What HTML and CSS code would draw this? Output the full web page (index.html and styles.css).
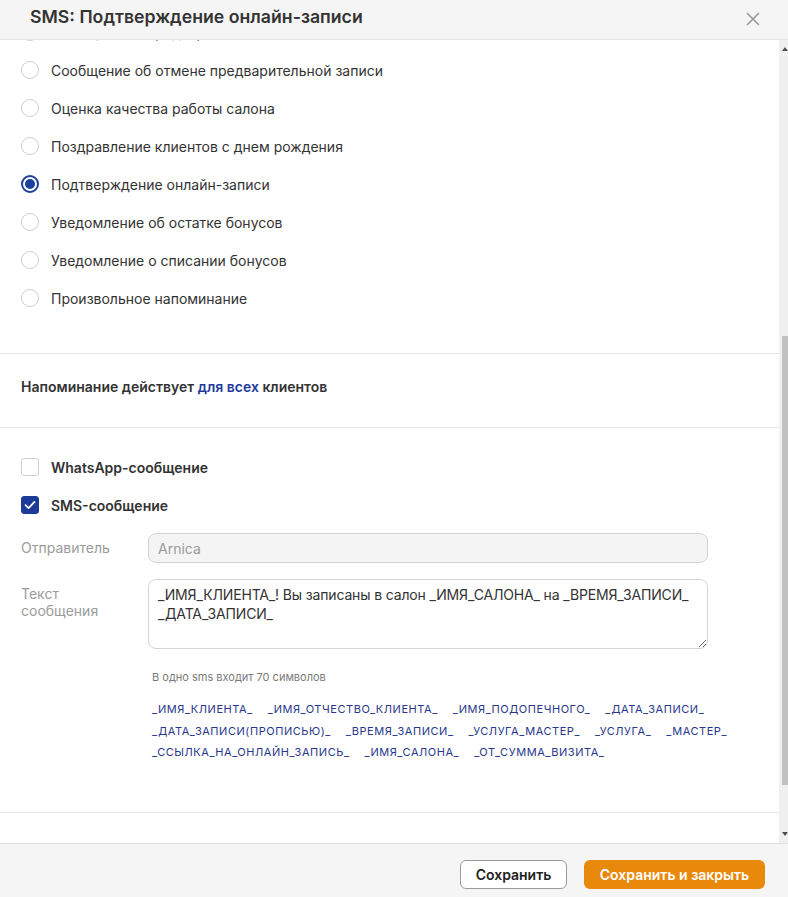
FILE: index.html
```html
<!DOCTYPE html>
<html lang="ru">
<head>
<meta charset="utf-8">
<title>SMS: Подтверждение онлайн-записи</title>
<link rel="stylesheet" href="styles.css">
</head>
<body>
<div class="modal">
  <header class="modal-header">
    <h1 class="modal-title">SMS: Подтверждение онлайн-записи</h1>
    <button class="close-btn" aria-label="Закрыть">
      <svg width="14" height="14" viewBox="0 0 14 14"><path d="M1 1L13 13M13 1L1 13" stroke="#9a9a9a" stroke-width="1.6" fill="none"/></svg>
    </button>
  </header>

  <div class="modal-main">
    <div class="modal-body" id="body">
      <section class="section list-section">
        <label class="radio-row"><span class="radio"></span><span>Напоминание о записи</span></label>
        <label class="radio-row"><span class="radio"></span><span>Напоминание о записи за 2 часа</span></label>
        <label class="radio-row"><span class="radio"></span><span>Благодарность за визит</span></label>
        <label class="radio-row"><span class="radio"></span><span>Напоминание о повторном визите</span></label>
        <label class="radio-row"><span class="radio"></span><span>Приглашение на повторный визит</span></label>
        <label class="radio-row"><span class="radio"></span><span>Сообщение о новой записи</span></label>
        <label class="radio-row"><span class="radio"></span><span>Сообщение об изменении записи</span></label>
        <label class="radio-row"><span class="radio"></span><span>Сообщение об отмене записи</span></label>
        <label class="radio-row"><span class="radio"></span><span>Напоминание о пропущенном визите</span></label>
        <label class="radio-row"><span class="radio"></span><span>Начисление бонусов</span></label>
        <label class="radio-row"><span class="radio"></span><span>Напоминание о сгорании бонусов</span></label>
        <label class="radio-row"><span class="radio"></span><span>Предварительная запись</span></label>
        <label class="radio-row"><span class="radio"></span><span>Сообщение о предварительной записи</span></label>
        <label class="radio-row"><span class="radio"></span><span>Сообщение об отмене предварительной записи</span></label>
        <label class="radio-row"><span class="radio"></span><span>Оценка качества работы салона</span></label>
        <label class="radio-row"><span class="radio"></span><span>Поздравление клиентов с днем рождения</span></label>
        <label class="radio-row" id="selected"><span class="radio checked"></span><span>Подтверждение онлайн-записи</span></label>
        <label class="radio-row"><span class="radio"></span><span>Уведомление об остатке бонусов</span></label>
        <label class="radio-row"><span class="radio"></span><span>Уведомление о списании бонусов</span></label>
        <label class="radio-row"><span class="radio"></span><span>Произвольное напоминание</span></label>
      </section>

      <section class="section scope-section">
        <p class="scope">Напоминание действует <a class="scope-link" href="#">для всех</a> клиентов</p>
      </section>

      <section class="section channels-section">
        <label class="check-row"><span class="checkbox"></span><span>WhatsApp-сообщение</span></label>
        <label class="check-row"><span class="checkbox checked">
          <svg width="12" height="10" viewBox="0 0 12 10"><path d="M1.5 5.2L4.6 8.2L10.5 1.8" stroke="#fff" stroke-width="1.7" fill="none" stroke-linecap="round" stroke-linejoin="round"/></svg>
        </span><span>SMS-сообщение</span></label>

        <div class="form-row sender-row">
          <div class="form-label">Отправитель</div>
          <input class="field input" type="text" value="Arnica" readonly>
        </div>
        <div class="form-row text-row">
          <div class="form-label">Текст<br>сообщения</div>
          <textarea class="field textarea">_ИМЯ_КЛИЕНТА_! Вы записаны в салон _ИМЯ_САЛОНА_ на _ВРЕМЯ_ЗАПИСИ_ _ДАТА_ЗАПИСИ_</textarea>
        </div>
        <div class="hint">В одно sms входит 70 символов</div>
        <div class="tags">
          <span class="tag">_ИМЯ_КЛИЕНТА_</span>
          <span class="tag">_ИМЯ_ОТЧЕСТВО_КЛИЕНТА_</span>
          <span class="tag">_ИМЯ_ПОДОПЕЧНОГО_</span>
          <span class="tag">_ДАТА_ЗАПИСИ_</span>
          <span class="tag">_ДАТА_ЗАПИСИ(ПРОПИСЬЮ)_</span>
          <span class="tag">_ВРЕМЯ_ЗАПИСИ_</span>
          <span class="tag">_УСЛУГА_МАСТЕР_</span>
          <span class="tag">_УСЛУГА_</span>
          <span class="tag">_МАСТЕР_</span>
          <span class="tag">_ССЫЛКА_НА_ОНЛАЙН_ЗАПИСЬ_</span>
          <span class="tag">_ИМЯ_САЛОНА_</span>
          <span class="tag">_ОТ_СУММА_ВИЗИТА_</span>
        </div>
      </section>

      <section class="section tail-section"></section>
    </div>

    <div class="scrollbar" aria-hidden="true">
      <div class="sb-btn sb-up"></div>
      <div class="sb-track">
        <div class="sb-thumb" id="thumb"></div>
      </div>
      <div class="sb-btn sb-down"></div>
    </div>
  </div>

  <footer class="modal-footer">
    <button class="btn btn-secondary">Сохранить</button>
    <button class="btn btn-primary">Сохранить и закрыть</button>
  </footer>
</div>
<script src="script.js"></script>
</body>
</html>
```

FILE: styles.css
```css
* { box-sizing: border-box; }

html, body {
  margin: 0;
  padding: 0;
  height: 100%;
  background: #fff;
}

body {
  font-family: Inter, "Noto Sans", "DejaVu Sans", sans-serif;
  font-size: 14px;
  color: #333;
}

.modal {
  display: flex;
  flex-direction: column;
  height: 100vh;
}

.modal-header {
  flex: 0 0 40px;
  display: flex;
  align-items: center;
  justify-content: space-between;
  padding: 0 27px 6px 30px;
  background: #f5f5f5;
  border-bottom: 1px solid #e3e3e3;
}

.modal-title {
  margin: 0;
  font-size: 17.7px;
  font-weight: 600;
  color: #333;
}

.close-btn {
  border: 0;
  background: none;
  padding: 0;
  width: 16px;
  height: 16px;
  display: flex;
  align-items: center;
  justify-content: center;
  margin-top: 4px;
}

.modal-main {
  flex: 1 1 auto;
  min-height: 0;
  display: flex;
}

.modal-body {
  flex: 1 1 auto;
  min-width: 0;
  overflow-y: auto;
  scrollbar-width: none;
  background: #fff;
}
.modal-body::-webkit-scrollbar { display: none; }

/* custom scrollbar */
.scrollbar {
  flex: 0 0 8px;
  display: flex;
  flex-direction: column;
  background: #f0f0f0;
}

.sb-btn {
  flex: 0 0 14px;
  display: flex;
  justify-content: center;
  padding-left: 3px;
}

.sb-up { align-items: flex-end; }
.sb-down { align-items: flex-start; }

.sb-up::before {
  content: "";
  width: 0;
  height: 0;
  border-left: 3px solid transparent;
  border-right: 3px solid transparent;
  border-bottom: 4px solid #505050;
  margin-bottom: 3px;
}
.sb-down::before {
  content: "";
  width: 0;
  height: 0;
  border-left: 3px solid transparent;
  border-right: 3px solid transparent;
  border-top: 4px solid #505050;
  margin-top: 3px;
}

.sb-track {
  flex: 1 1 auto;
  display: flex;
  flex-direction: column;
  align-items: flex-end;
}

.sb-thumb {
  width: 6px;
  height: 449px;
  margin-top: 282px;
  background: #c1c1c1;
}

.section {
  border-top: 1px solid #e6e6e6;
  padding: 0 21px;
}
.section:first-child { border-top: 0; }

.list-section {
  padding-top: 21px;
  padding-bottom: 36px;
}

.radio-row {
  display: flex;
  align-items: center;
  gap: 12px;
  height: 38px;
  color: #333;
}

.radio {
  width: 18px;
  height: 18px;
  border-radius: 50%;
  border: 1px solid #cfcfcf;
  background: #fff;
  flex: 0 0 auto;
  display: flex;
  align-items: center;
  justify-content: center;
}

.radio.checked {
  border: 2px solid #1c3f9e;
}
.radio.checked::after {
  content: "";
  width: 10px;
  height: 10px;
  border-radius: 50%;
  background: #1c3f9e;
}

.scope-section {
  padding-top: 23px;
  padding-bottom: 30px;
}

.scope {
  margin: 0;
  line-height: 20px;
  font-weight: 600;
  color: #333;
}

.scope-link {
  color: #1e3a9c;
  text-decoration: none;
}

.channels-section {
  padding-top: 20px;
  padding-bottom: 48px;
}

.check-row {
  display: flex;
  align-items: center;
  gap: 12px;
  height: 38px;
  font-weight: 600;
  color: #333;
}

.checkbox {
  width: 18px;
  height: 18px;
  border: 1px solid #d0d0d0;
  border-radius: 3px;
  background: #fff;
  flex: 0 0 auto;
  display: flex;
  align-items: center;
  justify-content: center;
}

.checkbox.checked {
  background: #1c3a98;
  border-color: #1c3a98;
}

.form-row {
  display: flex;
  align-items: flex-start;
  width: 687px;
}

.sender-row { margin-top: 9px; }
.text-row { margin-top: 16px; }

.form-label {
  flex: 0 0 127px;
  color: #9b9b9b;
  line-height: 17px;
}
.sender-row .form-label { padding-top: 6px; }
.text-row .form-label { padding-top: 6px; }

.field {
  flex: 1 1 auto;
  font-family: Inter, "Noto Sans", "DejaVu Sans", sans-serif;
  font-size: 14px;
  border: 1px solid #d4d4d4;
  border-radius: 8px;
  outline: none;
}

.input {
  height: 30px;
  padding: 0 9px;
  background: #f4f4f4;
  color: #9b9b9b;
}

.textarea {
  height: 70px;
  padding: 5px 6px 5px 9px;
  line-height: 19px;
  letter-spacing: -0.15px;
  color: #333;
  background: #fff;
  resize: vertical;
  display: block;
}

.hint {
  margin: 21px 0 0 131px;
  font-size: 11px;
  line-height: 15px;
  color: #7a7a7a;
}

.tags {
  margin: 14px 0 0 131px;
  width: 600px;
  display: flex;
  flex-wrap: wrap;
  column-gap: 15px;
  font-size: 11px;
  line-height: 21.5px;
  color: #27378c;
  letter-spacing: 0.55px;
}

.tail-section {
  height: 109px;
}

.modal-footer {
  flex: 0 0 54px;
  display: flex;
  justify-content: flex-end;
  align-items: flex-start;
  gap: 17px;
  padding: 16px 23px 0 0;
  background: #f5f5f5;
  border-top: 1px solid #e0e0e0;
}

.btn {
  height: 29px;
  border-radius: 6px;
  font-family: Inter, "Noto Sans", "DejaVu Sans", sans-serif;
  font-size: 14px;
  font-weight: 600;
  cursor: pointer;
}

.btn-secondary {
  width: 107px;
  background: #fff;
  border: 1px solid #9a9a9a;
  color: #222;
}

.btn-primary {
  width: 181px;
  background: #e8890c;
  border: 0;
  color: #fff;
}
```

FILE: script.js
```js
(function () {
  var body = document.getElementById('body');
  var item = document.getElementById('selected');
  var thumb = document.getElementById('thumb');
  function update() {
    var r = item.getBoundingClientRect();
    body.scrollTop += Math.round(r.top + r.height / 2 - 184);
    var track = thumb.parentNode.clientHeight;
    var ratio = body.clientHeight / body.scrollHeight;
    thumb.style.height = Math.round(track * ratio) + 'px';
    thumb.style.marginTop = Math.round(track * body.scrollTop / body.scrollHeight) + 'px';
  }
  update();
  window.addEventListener('load', update);
})();
```
